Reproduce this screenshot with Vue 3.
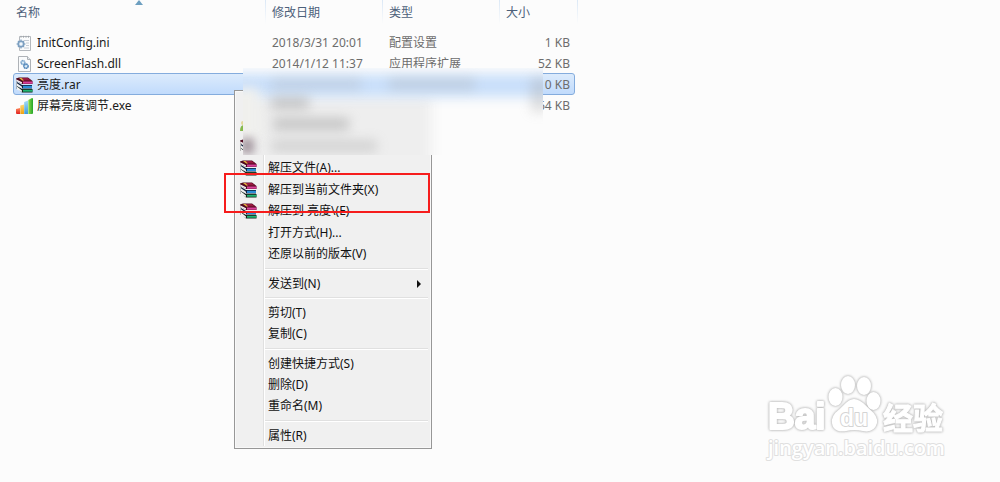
<script setup>
const files = [
  { icon: 'ini', name: 'InitConfig.ini', date: '2018/3/31 20:01', type: '配置设置', size: '1 KB' },
  { icon: 'dll', name: 'ScreenFlash.dll', date: '2014/1/12 11:37', type: '应用程序扩展', size: '52 KB' },
  { icon: 'rar', name: '亮度.rar', date: '', type: '', size: '10 KB', selected: true },
  { icon: 'exe', name: '屏幕亮度调节.exe', date: '', type: '', size: '64 KB' },
]

const groups = [
  [
    { label: '' },
    { label: '', icon: 'shield' },
    { label: '', icon: 'rar' },
    { label: '解压文件(A)...', icon: 'rar' },
    { label: '解压到当前文件夹(X)', icon: 'rar' },
    { label: '解压到 亮度\\(E)', icon: 'rar' },
    { label: '打开方式(H)...' },
    { label: '还原以前的版本(V)' },
  ],
  [{ label: '发送到(N)', submenu: true }],
  [{ label: '剪切(T)' }, { label: '复制(C)' }],
  [{ label: '创建快捷方式(S)' }, { label: '删除(D)' }, { label: '重命名(M)' }],
  [{ label: '属性(R)' }],
]
</script>

<template>
  <main class="explorer">
    <svg class="defs" aria-hidden="true">
      <linearGradient id="red" x2="0" y2="1"><stop stop-color="#ff8a5c" /><stop offset="1" stop-color="#e02020" /></linearGradient>
      <linearGradient id="gold" x2="0" y2="1"><stop stop-color="#ffd873" /><stop offset="1" stop-color="#f0a010" /></linearGradient>
      <linearGradient id="sky" x2="0" y2="1"><stop stop-color="#a5dcf5" /><stop offset="1" stop-color="#3d9bdc" /></linearGradient>
      <linearGradient id="leaf" x2="1" y2="0"><stop stop-color="#8edb4a" /><stop offset="1" stop-color="#22a52a" /></linearGradient>
      <symbol id="i-rar" viewBox="0 0 17 16">
        <path d="M1 11 6 15.500H16.500V12H6L1 9z" fill="#14251c" />
        <path d="M1 9.500 6 13.500V15L1 12.500z" fill="#f2f2f2" />
        <path d="M7 12.800h9.500v1.900H7z" fill="#20b573" />
        <path d="M1 6.500 6 11.500H16V8H6L1 5z" fill="#10233f" />
        <path d="M.5 6 6 9.800v1.500L.5 8.500z" fill="#f2f2f2" />
        <path d="M7 8.800h9v2.200H7z" fill="#2a8dd6" />
        <path d="M0 1.500 3 .5h9L16.500 4v3H6L0 3.500z" fill="#50091f" />
        <path d="M3.500 1h8.300L15 3.500H6.500z" fill="#96183f" />
        <path d="M0 2.200 6 5.300v1.500L.3 4z" fill="#f2f2f2" />
        <path d="M7 4.500h9.500v2.200H7z" fill="#d9409a" />
        <path d="M3 1h2.500L8 3.500H6.300z" fill="#e0b53c" />
        <path d="M.5 4.500v8" stroke="#666" stroke-width=".8" stroke-dasharray="1 1" />
      </symbol>
      <symbol id="i-ini" viewBox="0 0 17 16">
        <path d="M3.500 1.500h11v14h-11z" fill="#fbfcfd" stroke="#b4b8bd" />
        <path d="M5 .8v2M7.500 .8v2M10 .8v2M12.500 .8v2" stroke="#9b9fa5" stroke-width=".8" />
        <path d="M8 5.500h5M10 8h3M10 10.500h3M8 13h5" stroke="#c4ccd5" />
        <circle cx="5" cy="9" r="2.800" fill="#d4e4f2" stroke="#7d9fc0" stroke-width="1.600" />
        <path d="M5 4.500v2M5 11.500v2M.5 9h2M7.500 9h2M2 6l1 1M7 11l1 1M2 12l1-1M7 7l1-1" stroke="#7d9fc0" stroke-width="1.200" />
        <circle cx="5" cy="9" r="1" fill="#fff" />
      </symbol>
      <symbol id="i-dll" viewBox="0 0 17 16">
        <path d="M2.500.5h9l3 3v12h-12z" fill="#fafbfc" stroke="#aeb2b7" />
        <path d="M11.500.5v3h3" fill="#e6eaee" stroke="#aeb2b7" />
        <circle cx="7" cy="6.500" r="1.900" fill="#dcecf8" stroke="#7ba5cc" stroke-width="1.500" stroke-dasharray="1.400 .3" />
        <circle cx="10" cy="10.200" r="2.100" fill="#dcecf8" stroke="#5387ba" stroke-width="1.600" stroke-dasharray="1.500 .3" />
      </symbol>
      <symbol id="i-exe" viewBox="0 0 17 16">
        <path d="M0 11 4 10v6H1q-1 0-1-1z" fill="url(#red)" />
        <path d="M4.300 7.500 8 6.500V16H4.300z" fill="url(#gold)" />
        <path d="M8.200 4 12 2.500V16H8.200z" fill="url(#sky)" />
        <path d="M12.300 2 16 0q1 0 1 1v14q0 1-1 1h-3.700z" fill="url(#leaf)" />
      </symbol>
      <symbol id="i-shield" viewBox="0 0 17 16">
        <circle cx="3" cy="6" r="2" fill="#e3d79a" />
        <path d="M0 14q0-6 4-6t5 6z" fill="#86b94c" />
      </symbol>
    </svg>

    <table class="files">
      <colgroup><col class="c-name" /><col class="c-date" /><col class="c-type" /><col class="c-size" /></colgroup>
      <thead>
        <tr>
          <th scope="col" aria-sort="ascending">名称<span class="sort"></span></th>
          <th scope="col">修改日期</th>
          <th scope="col">类型</th>
          <th scope="col">大小</th>
        </tr>
      </thead>
      <tbody>
        <tr v-for="f in files" :key="f.name" :class="{ selected: f.selected }">
          <td class="name"><span class="file"><svg class="icon"><use :href="'#i-' + f.icon" /></svg>{{ f.name }}</span></td>
          <td>{{ f.date }}</td>
          <td>{{ f.type }}</td>
          <td class="size">{{ f.size }}</td>
        </tr>
      </tbody>
    </table>

    <nav class="menu">
      <div v-for="(g, gi) in groups" :key="gi" class="group">
        <button v-for="(item, i) in g" :key="i" type="button" class="item">
          <span class="slot"><svg v-if="item.icon" class="icon"><use :href="'#i-' + item.icon" /></svg></span>
          <span class="label">{{ item.label }}</span>
          <span v-if="item.submenu" class="arrow"></span>
        </button>
      </div>
    </nav>

    <div class="veil">
      <i class="panel"></i>
      <i class="band"></i>
      <i class="corner"></i>
      <i class="smudge date"></i>
      <i class="smudge type"></i>
      <i class="smudge one"></i>
      <i class="smudge two"></i>
      <i class="smudge three"></i>
      <i class="smudge books"></i>
      <i class="smudge kb"></i>
    </div>
    <div class="highlight"></div>

    <svg class="brand" viewBox="0 0 200 100" role="img" aria-label="Baidu 经验">
      <g class="mark">
        <text class="latin" x="8" y="59">Bai</text>
        <ellipse cx="75.500" cy="27" rx="6" ry="8" />
        <ellipse cx="88" cy="15" rx="6" ry="8" />
        <ellipse cx="104" cy="16" rx="6" ry="8" />
        <ellipse cx="113.500" cy="31" rx="6" ry="8" />
        <path d="M94 30C101 30 104 36 109 40C114 44 117 48 116 53C114 60 108 61 103 60Q94 58 86 60C80 61 74 60 73 53C72 47 76 43 80 40C85 36 88 30 94 30Z" />
        <text class="han" x="123" y="59">经验</text>
      </g>
      <text class="site" x="8" y="85">jingyan.baidu.com</text>
      <text class="du" x="80" y="56">du</text>
    </svg>
  </main>
</template>

<style>
body {
  margin: 0;
  background: #fcfcfc;
}
</style>

<style scoped>
.explorer {
  position: relative;
  min-height: 100vh;
  overflow: hidden;
  background: #fcfcfc;
  font: 12px/20px "Noto Sans", "Noto Sans CJK SC", sans-serif;
  color: #1a1a1a;
}
.defs {
  position: absolute;
  width: 0;
  height: 0;
}
.files {
  width: 565px;
  margin-left: 13px;
  table-layout: fixed;
  border-collapse: separate;
  border-spacing: 0;
}
.c-name { width: 253px; }
.c-date, .c-type { width: 117px; }
.c-size { width: 78px; }
th {
  position: relative;
  height: 32px;
  padding: 3px 0 0 6px;
  box-sizing: border-box;
  vertical-align: top;
  text-align: left;
  font-weight: 400;
  color: #4c607a;
  background: linear-gradient(#dbe8f6, #fcfcfc) no-repeat right top / 1px 24px;
}
th:first-child { padding-left: 3px; }
.sort {
  position: absolute;
  top: 0;
  left: 50%;
  margin-left: -5px;
  border: solid transparent;
  border-width: 0 4px 5px;
  border-bottom-color: #6d9fc0;
}
td {
  height: 21px;
  box-sizing: border-box;
  padding: 0 0 0 6px;
  line-height: 19px;
  color: #6d6d6d;
  white-space: nowrap;
}
td.name {
  padding-left: 3px;
  color: #1a1a1a;
}
td.size {
  padding: 0 8px 0 0;
  text-align: right;
}
.file {
  display: flex;
  align-items: center;
  gap: 4px;
}
.icon {
  display: block;
  width: 17px;
  height: 16px;
  flex: none;
}
.selected {
  position: relative;
  z-index: 0;
}
.selected .name::before {
  content: "";
  position: absolute;
  inset: -1px 3px 0 0;
  z-index: -1;
  background: linear-gradient(#dcebfc, #c1dbfc);
  border: 1px solid #84acdd;
  border-radius: 3px;
}
.menu {
  position: absolute;
  left: 234px;
  top: 90px;
  width: 198px;
  box-sizing: border-box;
  padding: 2px 3px 2px 2px;
  border: 1px solid #979797;
  box-shadow: inset 0 0 0 1px #f8f8f8;
  background: linear-gradient(90deg, #e0e0e0 50%, #fff 50%) no-repeat 28px 2px / 2px calc(100% - 4px), #f0f0f0;
}
.group {
  display: grid;
  grid-auto-rows: 1fr;
}
.group:nth-child(1) { height: 172px; }
.group:nth-child(2), .group:nth-child(5) { height: 21px; }
.group:nth-child(3) { height: 43px; }
.group:nth-child(4) { height: 64px; }
.group + .group {
  padding-top: 8px;
  background: linear-gradient(#e0e0e0 50%, #fff 50%) no-repeat 28px 3px / 100% 2px;
}
.item {
  display: flex;
  align-items: center;
  min-height: 0;
  padding: 0 7px 0 3px;
  border: 0;
  background: none;
  font: inherit;
  color: #111;
  text-align: left;
}
.slot { width: 28px; }
.label {
  flex: 1;
  white-space: nowrap;
}
.arrow {
  border: solid transparent;
  border-width: 4px 0 4px 4px;
  border-left-color: #111;
}
.veil {
  position: absolute;
  left: 243px;
  top: 68px;
  width: 300px;
  height: 87px;
  overflow: hidden;
  background: #fcfcfc;
}
.veil i {
  position: absolute;
  filter: blur(6px);
}
.veil .panel {
  left: -10px;
  top: 28px;
  width: 198px;
  height: 80px;
  background: #eee;
}
.veil .band {
  left: -20px;
  top: 6px;
  width: 350px;
  height: 23px;
  background: #c9dffa;
}
.veil .corner {
  left: -12px;
  top: 20px;
  width: 28px;
  height: 52px;
  background: #f0f0ed;
}
.veil .smudge {
  height: 12px;
  background: #a8a8a8;
  opacity: .6;
}
.veil .date { left: 28px; top: 10px; width: 90px; opacity: .25; }
.veil .type { left: 146px; top: 10px; width: 86px; opacity: .3; }
.veil .one { left: 28px; top: 29px; width: 38px; }
.veil .two { left: 30px; top: 50px; width: 76px; }
.veil .three { left: 28px; top: 72px; width: 106px; opacity: .4; }
.veil .books { left: -2px; top: 70px; width: 13px; height: 16px; background: #75616e; filter: blur(4px); }
.veil .kb { left: 288px; top: 10px; width: 16px; height: 34px; opacity: .35; }
.highlight {
  position: absolute;
  left: 224px;
  top: 173px;
  width: 206px;
  height: 40px;
  box-sizing: border-box;
  border: 2px solid #f61c1c;
  pointer-events: none;
}
.brand {
  position: absolute;
  right: 40px;
  bottom: 12px;
  width: 200px;
  height: 100px;
  fill: #fff;
  stroke-linejoin: round;
  pointer-events: none;
}
.mark {
  stroke: #fff;
  stroke-width: 2px;
  filter: drop-shadow(0 0 1px #bbb) drop-shadow(0 0 1px #ccc);
}
.du,
.site {
  stroke: #d4d4d4;
  stroke-width: 2px;
  paint-order: stroke;
}
.site { stroke: #e0e0e0; }
.latin { font: 700 37px "Liberation Sans", sans-serif; }
.du { font: 700 23px "Liberation Sans", sans-serif; }
.han { font: 700 30px "Noto Sans CJK SC", sans-serif; stroke-width: 1px; }
.site { font: 600 20px "Open Sans", sans-serif; }
</style>
